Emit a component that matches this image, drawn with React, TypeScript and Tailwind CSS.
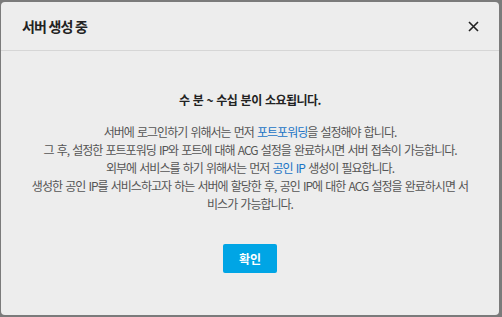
import React from 'react';

export default function App() {
  return (
    <div
      className="w-[502px] h-[317px] bg-[#7b7b7b] pt-[2px] pl-[1px] overflow-hidden"
      style={{ fontFamily: '"Noto Sans CJK KR", "Noto Sans", sans-serif' }}
    >
      <div className="w-[498px] h-[313px] bg-[#ededed] rounded-[4px] flex flex-col">
        {/* Header */}
        <div className="h-[49px] flex items-center justify-between pl-[21px] pr-[20px] border-b border-[#d6d6d6]">
          <h2 className="text-[14px] font-bold text-[#222] tracking-[-0.8px]">서버 생성 중</h2>
          <button className="w-[12px] h-[12px] flex items-center justify-center text-[#222]">
            <svg width="11" height="11" viewBox="0 0 11 11" fill="none" stroke="currentColor" strokeWidth="1.6">
              <path d="M1 1L10 10M10 1L1 10" />
            </svg>
          </button>
        </div>

        {/* Body */}
        <div className="flex flex-col items-center pt-[40px] px-[20px]">
          <p className="text-[12px] leading-[18px] font-bold text-[#222] tracking-[-0.5px] [word-spacing:1px]">
            수 분 ~ 수십 분이 소요됩니다.
          </p>
          <p className="mt-[14px] text-[12px] leading-[18px] text-[#555] text-center whitespace-nowrap tracking-[-1px] [word-spacing:1.5px]">
            서버에 로그인하기 위해서는 먼저 <span className="text-[#1b74c5]">포트포워딩</span>을 설정해야 합니다.
            <br />
            그 후, 설정한 포트포워딩 IP와 포트에 대해 ACG 설정을 완료하시면 서버 접속이 가능합니다.
            <br />
            외부에 서비스를 하기 위해서는 먼저 <span className="text-[#1b74c5]">공인 IP</span> 생성이 필요합니다.
            <br />
            생성한 공인 IP를 서비스하고자 하는 서버에 할당한 후, 공인 IP에 대한 ACG 설정을 완료하시면 서
            <br />
            비스가 가능합니다.
          </p>
          <button className="mt-[31px] w-[54px] h-[29px] rounded-[2px] bg-[#00a5e5] text-white text-[12px] font-bold">
            확인
          </button>
        </div>
      </div>
    </div>
  );
}
